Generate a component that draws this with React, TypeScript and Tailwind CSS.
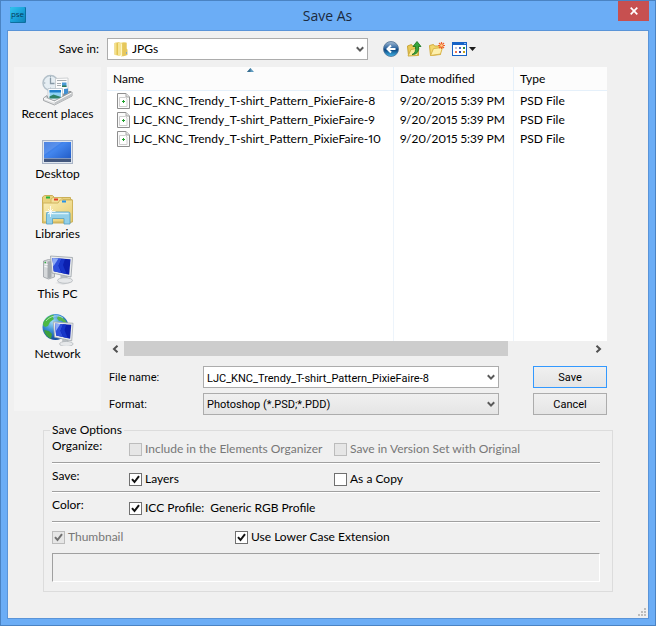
import React from 'react';

const files = [
  { name: 'LJC_KNC_Trendy_T-shirt_Pattern_PixieFaire-8', date: '9/20/2015 5:39 PM', type: 'PSD File' },
  { name: 'LJC_KNC_Trendy_T-shirt_Pattern_PixieFaire-9', date: '9/20/2015 5:39 PM', type: 'PSD File' },
  { name: 'LJC_KNC_Trendy_T-shirt_Pattern_PixieFaire-10', date: '9/20/2015 5:39 PM', type: 'PSD File' },
];

/* ---------- small icons ---------- */

function PseIcon() {
  return (
    <svg className="block w-4 h-4" viewBox="0 0 16 16">
      <defs>
        <linearGradient id="pse" x1="0" y1="0" x2="1" y2="1">
          <stop offset="0" stopColor="#35c3ee" />
          <stop offset="0.5" stopColor="#1ba5dc" />
          <stop offset="1" stopColor="#0d83b8" />
        </linearGradient>
      </defs>
      <rect width="16" height="16" rx="1" fill="#0d6f9f" />
      <rect width="15" height="15" rx="1" fill="url(#pse)" />
      <text x="7.5" y="10" textAnchor="middle" fontSize="8" fontFamily="Open Sans, sans-serif" fill="#063a5c">pse</text>
    </svg>
  );
}

function FolderIcon() {
  return (
    <svg className="block w-4 h-4" viewBox="0 0 16 16">
      <path d="M1.500 2l5-1v14l-5-1.500z" fill="#e3c452" />
      <path d="M1.500 2l2-.5v13l-2-.7z" fill="#f3e08c" />
      <path d="M5 1.500h7.500v12L5 15z" fill="#f6e596" />
      <path d="M8 2h5.500v12L8 15.500z" fill="#ecd068" />
      <path d="M9.500 1.500h4v6l1 1v5.500l-5 1.500z" fill="#e6c75c" />
      <path d="M8.500 2.500v12.500" stroke="#fdf5c4" />
      <path d="M13.500 11v2" stroke="#7fa8c8" />
    </svg>
  );
}

function FileIcon() {
  return (
    <svg className="block w-[13px] h-4 shrink-0" viewBox="0 0 13 16">
      <path d="M.5.5h8.500l3.500 3.500v11.500H.5z" fill="#fbfbfb" stroke="#8e8e8e" />
      <path d="M9 .5V4h3.500" fill="#e4e4e4" stroke="#a8a8a8" />
      <path d="M2.500 4.500h6l1.500 1.500v7.500H2.500z" fill="#fff" stroke="#cfcfcf" />
      <path d="M6.500 7v3M5 8.500h3" stroke="#1fa02c" />
    </svg>
  );
}

function Chevron() {
  return (
    <svg className="block w-[8px] h-[7px]" viewBox="0 0 8 7">
      <path d="M.8 1.200L4 4.600l3.200-3.400" fill="none" stroke="#5a5a5a" strokeWidth="2" />
    </svg>
  );
}

function BackIcon() {
  return (
    <svg className="block w-4 h-4" viewBox="0 0 16 16">
      <defs>
        <linearGradient id="back" x1="0" y1="0" x2="0" y2="1">
          <stop offset="0" stopColor="#a7bdd4" />
          <stop offset="0.45" stopColor="#2d65a0" />
          <stop offset="0.55" stopColor="#0b4580" />
          <stop offset="1" stopColor="#43b9ec" />
        </linearGradient>
      </defs>
      <circle cx="8" cy="8" r="7.500" fill="url(#back)" stroke="#4c6f92" strokeWidth=".8" />
      <path d="M12.500 8H5M8 4.500L4.500 8 8 11.500" fill="none" stroke="#fff" strokeWidth="2" />
    </svg>
  );
}

function UpIcon() {
  return (
    <svg className="block w-4 h-4" viewBox="0 0 16 16">
      <path d="M1.500 5l4-1.500 1 1.500h6v9.500h-10z" fill="#e8c955" stroke="#c9a436" />
      <path d="M2 15l3-6.500 8-1.500-1.500 7.500z" fill="#fbeb9c" stroke="#cfae42" />
      <path d="M6 13.500c3-1 4-3.500 3.500-8H7l4-5 4 5h-2.500c.5 5-1.500 8-6.500 8z" fill="#37a53a" stroke="#16701c" strokeWidth=".8" />
    </svg>
  );
}

function NewFolderIcon() {
  return (
    <svg className="block w-4 h-4" viewBox="0 0 16 16">
      <path d="M.5 4.500l4-1 1 1.500h6v8.500l-10 1z" fill="#f2d76c" stroke="#d2ab3c" />
      <path d="M1.500 14.500l3-7 9-1-2 6.500z" fill="#fdf0ae" stroke="#dab64c" />
      <path d="M12.500 1v7M9 4.500h7M10 2l5 5M15 2l-5 5" stroke="#f0612a" strokeWidth="1.200" />
      <circle cx="12.500" cy="4.500" r="1.300" fill="#ffd28a" />
    </svg>
  );
}

function ViewIcon() {
  return (
    <svg className="block w-[24px] h-[14px]" viewBox="0 0 24 14">
      <rect x=".5" y=".5" width="14" height="13" fill="#fff" stroke="#1763c6" />
      <path d="M0 1.500h15" stroke="#1763c6" strokeWidth="3" />
      <path d="M12 1.500h2" stroke="#8bbcf5" />
      <path d="M3 5h2v2H3z" fill="#c6c6d6" />
      <path d="M7 5h2v2H7z" fill="#4a66c0" />
      <path d="M11 5h2v2h-2z" fill="#2c8c3a" />
      <path d="M3 9h2v2H3z" fill="#ef7550" />
      <path d="M7 9h2v2H7z" fill="#2b3fae" />
      <path d="M11 9h2v2h-2z" fill="#c7a21c" />
      <path d="M17 5h7l-3.500 4z" fill="#1c1c1c" />
    </svg>
  );
}

/* ---------- places ---------- */

function Screen({ x, y }: { x: number; y: number }) {
  return (
    <g transform={`translate(${x} ${y})`}>
      <path d="M10 19l7 1v5h-7z" fill="#b9bec2" />
      <ellipse cx="14.500" cy="24.500" rx="7.500" ry="2.800" fill="#e6e8ea" stroke="#b0b5b9" strokeWidth=".8" />
      <path d="M0 0l22 1.500-1.500 19.500L1.500 17z" fill="#e8ebed" stroke="#9ba1a6" strokeWidth=".8" />
      <path d="M2 2l18 1.300-1.300 15.400L3.200 15.200z" fill="#0b1fae" />
      <path d="M2 2l9 .7-3 7 3 7.200-7.800-1.700z" fill="#2f50dc" />
      <path d="M11 2.700l3.500.3-2 6 3.500 9-4.500-1-3.500-7.300z" fill="#1735c8" />
      <path d="M2 2l6 .4-5.200 8z" fill="#8daaf5" />
    </g>
  );
}

function RecentIcon() {
  return (
    <svg className="block w-8 h-8" viewBox="0 0 32 32">
      <circle cx="8.500" cy="9" r="7.500" fill="#e6eef3" stroke="#b3c0c9" strokeWidth="1.500" />
      <path d="M8.500 4v5.500h4" fill="none" stroke="#8799a6" strokeWidth="1.300" />
      <path d="M8.500 2.200v1.300M2 9h1.300M8.500 15v-1.300" stroke="#8fa0ac" />
      <path d="M2 25l9-7 18-1 1 2-16 8z" fill="#8f9395" />
      <path d="M13.500 4.500L26 4v15.500H13.500z" fill="#fcfcfc" stroke="#c3c7c9" strokeWidth=".8" />
      <path d="M15 6.500h9.500M15 9.500h4M15 11.500h4" stroke="#a7adb1" />
      <path d="M20 8.500h4.500v4.500H20z" fill="#4b9ad6" />
      <path d="M20 11.500h4.500V13H20z" fill="#2e7a54" />
      <path d="M22 15l4-.5v5l-4 1z" fill="#3f8ed0" />
      <path d="M6 14.500h14.500V26H6z" fill="#fff" stroke="#b9c3ca" strokeWidth=".8" />
      <path d="M7.500 16H19v8.500H7.500z" fill="#8fd3f5" />
      <path d="M7.500 16H19v2.500H7.500z" fill="#1f80cc" />
      <path d="M7.500 22.500l4-2 7.500 2.500v1.500H7.500z" fill="#2f8266" />
      <path d="M1.500 24l3.500-2.500v2l7 3.500 18-9v4l-17.500 9-11-4.500z" fill="#e3e4e5" stroke="#929698" strokeWidth=".8" />
      <path d="M12.500 27.500L30 18.500V22l-17.500 9z" fill="#c3c6c8" />
      <path d="M2 24.500l10.500 3.500 17-9" fill="none" stroke="#fff" />
    </svg>
  );
}

function DesktopIcon() {
  return (
    <svg className="block w-8 h-8" viewBox="0 0 32 32">
      <defs>
        <linearGradient id="desk" x1="0" y1="0" x2="1" y2="1">
          <stop offset="0" stopColor="#2d61c8" />
          <stop offset="0.4" stopColor="#4386ee" />
          <stop offset="1" stopColor="#1d55c0" />
        </linearGradient>
      </defs>
      <rect x=".5" y="6.500" width="30" height="23" fill="#dfe6ef" stroke="#a9b4c6" />
      <rect x="2" y="8" width="27" height="20" fill="url(#desk)" />
      <path d="M2 8h18L2 21z" fill="#6da0f2" opacity=".55" />
      <rect x="2" y="24" width="27" height="4" fill="#43577d" />
      <path d="M2 24.500h27" stroke="#8398bd" />
    </svg>
  );
}

function LibrariesIcon() {
  return (
    <svg className="block w-8 h-8" viewBox="0 0 32 32">
      <defs>
        <linearGradient id="lib" x1="0" y1="0" x2="1" y2="1">
          <stop offset="0" stopColor="#fbf0bb" />
          <stop offset="1" stopColor="#e7cb6c" />
        </linearGradient>
      </defs>
      <path d="M.5 29V3l2-1.500h8l2 2h16V29z" fill="#e9d27e" stroke="#cbaf57" />
      <path d="M9 7V5l2-1.500h8l2 2h9V28H9z" fill="#f3e09a" stroke="#cbaf57" strokeWidth=".8" />
      <path d="M1 28V9h15l2-3h12.500v22z" fill="url(#lib)" stroke="#cfb45c" />
      <path d="M4 3.500h4" stroke="#22b43a" strokeWidth="2" />
      <path d="M12 5.500h4" stroke="#e23c26" strokeWidth="2" />
      <path d="M20 7.500h4" stroke="#2792e8" strokeWidth="2" />
      <path d="M4.500 30V19.500q0-1.500 1.500-1.500h20.500q1.500 0 1.500 1.500V30h-6v-5.500H10.500V30z" fill="#93cfe8" stroke="#529fc4" strokeWidth=".8" />
      <path d="M6.500 19.500h20" stroke="#d9f3fc" strokeWidth="1.500" />
      <path d="M8.500 12v11M3.500 17.500h10M6 15l5 5M11 15l-5 5" stroke="#fff" strokeWidth=".8" />
    </svg>
  );
}

function PcIcon() {
  return (
    <svg className="block w-8 h-8" viewBox="0 0 32 32">
      <path d="M1.500 7l5-1.500 6 1v16.500l-6 2-5-2z" fill="#d6d9db" stroke="#9aa0a4" strokeWidth=".8" />
      <path d="M5.500 7.500l4-.5v16.500l-4 1z" fill="#a5aaae" />
      <path d="M2.500 10l3 .5M2.500 12.500l3 .5" stroke="#fff" />
      <path d="M2.500 8.500H4" stroke="#34a844" strokeWidth="1.500" />
      <path d="M13 29l10-3 7 2-9 3z" fill="#d9dcde" opacity=".7" />
      <Screen x={8.5} y={2} />
    </svg>
  );
}

function NetworkIcon() {
  return (
    <svg className="block w-8 h-8" viewBox="0 0 32 32">
      <defs>
        <radialGradient id="globe" cx="0.4" cy="0.3" r="0.7">
          <stop offset="0" stopColor="#a4dcf8" />
          <stop offset="0.5" stopColor="#3b8fd4" />
          <stop offset="1" stopColor="#12489a" />
        </radialGradient>
      </defs>
      <circle cx="13.500" cy="13" r="13" fill="url(#globe)" />
      <path d="M2 7C5 3 8 1 12 .8l-1 2.700 1 1.500-4 3-2 4-3 1-2-2c0-1 .3-3 1-4z" fill="#4cb944" />
      <path d="M16 2c4 .5 7 3 9 7l-3-.5-3-2-2 .5-2-2.500z" fill="#57b64e" />
      <path d="M2 16l5 1 3 3-1 5c-4-2-6.500-5-7-9z" fill="#3d9f3e" />
      <path d="M4 7c4-5 12-7 17-3" fill="none" stroke="#e0f7ff" opacity=".6" />
      <g transform="translate(0 7)">
        <g transform="scale(.9)">
          <Screen x={12.5} y={1} />
        </g>
      </g>
    </svg>
  );
}

const places = [
  { label: 'Recent places', icon: <RecentIcon /> },
  { label: 'Desktop', icon: <DesktopIcon /> },
  { label: 'Libraries', icon: <LibrariesIcon /> },
  { label: 'This PC', icon: <PcIcon /> },
  { label: 'Network', icon: <NetworkIcon /> },
];

function Check({ label, checked, disabled }: { label: string; checked?: boolean; disabled?: boolean }) {
  return (
    <label className="relative flex items-center gap-[3px] pt-[3px] whitespace-nowrap has-disabled:text-[#777]">
      <input
        type="checkbox"
        defaultChecked={checked}
        disabled={disabled}
        className="peer appearance-none w-[13px] h-[13px] shrink-0 border border-[#707070] bg-white disabled:border-[#bcbcbc] disabled:bg-[#e6e6e6]"
      />
      <svg
        className="absolute left-0 w-[13px] h-[13px] text-[#111] opacity-0 pointer-events-none peer-checked:opacity-100 peer-disabled:text-[#707070]"
        viewBox="0 0 13 13"
      >
        <path d="M3 6.200l2.500 2.800L10 3.200" fill="none" stroke="currentColor" strokeWidth="2" />
      </svg>
      <span className="whitespace-pre">{label}</span>
    </label>
  );
}

function Separator() {
  return <hr className="h-[2px] border-t border-b border-t-[#a0a0a0] border-b-white" />;
}

export default function App() {
  return (
    <div className="min-h-screen flex flex-col bg-[#6badf6] border border-[#4a83c3] px-[6px] pb-[6px] font-[Lato,sans-serif] text-[12px] leading-4 text-black">
      <header className="relative flex items-start h-[29px]">
        <div className="pt-[6px] pl-[3px]">
          <PseIcon />
        </div>
        <h1 className="flex-1 pt-[5px] pr-[20px] text-center font-['Open_Sans',sans-serif] text-[14px] leading-5 text-[#1b2a3d]">Save As</h1>
        <button aria-label="Close" className="absolute right-0 top-0 w-[31px] h-5 flex items-center justify-center bg-[#c75050]">
          <svg className="w-2 h-2" viewBox="0 0 8 8">
            <path d="M.7.7l6.600 6.600M7.300.7L.7 7.300" stroke="#fff" strokeWidth="1.700" />
          </svg>
        </button>
      </header>

      <main className="relative flex-1 bg-[#f0f0f0] border border-[#5a94d8] pl-[6px] pr-[35px] pt-[7px]">
        <div className="flex items-center h-[22px] mb-[7px] pr-[6px]">
          <label htmlFor="save-in" className="w-[93px] pr-[8px] text-right">Save in:</label>
          <div className="relative w-[261px]">
            <select id="save-in" className="appearance-none block w-full h-[22px] pl-[24px] bg-white border border-[#acacac]">
              <option>JPGs</option>
            </select>
            <div className="absolute left-[6px] top-[3px] pointer-events-none"><FolderIcon /></div>
            <div className="absolute right-[4px] top-[8px] pointer-events-none"><Chevron /></div>
          </div>
          <div className="flex items-center gap-[7px] ml-[15px]">
            <button aria-label="Back"><BackIcon /></button>
            <button aria-label="Up one level"><UpIcon /></button>
            <button aria-label="New folder"><NewFolderIcon /></button>
            <button aria-label="View menu"><ViewIcon /></button>
          </div>
        </div>

        <div className="flex gap-[6px] mr-[6px]">
          <nav className="flex flex-col gap-3 w-[87px] shrink-0 pt-[7px] mb-1 bg-[#f4f4f4]">
            {places.map(place => (
              <button key={place.label} className="flex flex-col items-center whitespace-nowrap">
                {place.icon}
                {place.label}
              </button>
            ))}
          </nav>

          <div className="flex-1 min-w-0">
            <div className="relative h-[274px] bg-white">
              <table className="w-full h-full table-fixed border-separate border-spacing-0 text-left whitespace-nowrap">
                <colgroup>
                  <col />
                  <col className="w-[120px]" />
                  <col className="w-[93px]" />
                </colgroup>
                <thead>
                  <tr className="h-6 bg-[#fcfcfc]">
                    <th className="font-normal p-0 pl-[6px] border-r border-b border-[#e5f0fa]">Name</th>
                    <th className="font-normal p-0 pl-[6px] border-r border-b border-[#e5f0fa]">Date modified</th>
                    <th className="font-normal p-0 pl-[6px] border-b border-[#e5f0fa]">Type</th>
                  </tr>
                </thead>
                <tbody className="proportional-nums">
                  {files.map(file => (
                    <tr key={file.name} className="h-[19px]">
                      <td className="p-0 pl-[10px] border-r border-[#edf4fb]">
                        <div className="flex items-center gap-[3px]">
                          <FileIcon />
                          {file.name}
                        </div>
                      </td>
                      <td className="p-0 pl-[6px] border-r border-[#edf4fb]">{file.date}</td>
                      <td className="p-0 pl-[6px]">{file.type}</td>
                    </tr>
                  ))}
                  <tr>
                    <td className="p-0 border-r border-[#edf4fb]" />
                    <td className="p-0 border-r border-[#edf4fb]" />
                    <td className="p-0" />
                  </tr>
                </tbody>
              </table>
              <svg className="absolute left-[140px] top-[1px] w-[7px] h-[4px]" viewBox="0 0 7 4">
                <path d="M0 4l3.500-4L7 4z" fill="#5f9cc0" />
                <path d="M0 4l3.500-4v4z" fill="#3c6f90" />
              </svg>
            </div>

            {/* horizontal scroll bar */}
            <div className="flex h-[15px] text-[#505050]">
              <button aria-label="Scroll left" className="w-[17px] flex items-center justify-center">
                <svg className="w-[7px] h-2" viewBox="0 0 7 8">
                  <path d="M5.500.8L2 4l3.500 3.200" fill="none" stroke="currentColor" strokeWidth="2" />
                </svg>
              </button>
              <div className="flex-1">
                <div className="w-[82.4%] h-full bg-[#cdcdcd]" />
              </div>
              <button aria-label="Scroll right" className="w-[17px] flex items-center justify-center">
                <svg className="w-[7px] h-2" viewBox="0 0 7 8">
                  <path d="M1.500.8L5 4 1.500 7.200" fill="none" stroke="currentColor" strokeWidth="2" />
                </svg>
              </button>
            </div>

            <div className="grid grid-cols-[94px_1fr_108px] gap-y-[5px] items-center mt-[10px] pl-[2px] font-[Roboto,sans-serif] text-[11px]">
              <label htmlFor="file-name" className="pt-[2px]">File name:</label>
              <div className="relative">
                <input id="file-name" type="text" defaultValue="LJC_KNC_Trendy_T-shirt_Pattern_PixieFaire-8" className="block w-full h-[22px] pt-[2px] pl-[3px] pr-5 bg-white border border-[#acacac]" />
                <div className="absolute right-[4px] top-[8px] pointer-events-none"><Chevron /></div>
              </div>
              <button className="justify-self-end w-[74px] h-[22px] pt-[2px] bg-linear-to-b from-[#f0f0f0] to-[#e5e5e5] border border-[#3399ff]">Save</button>
              <label htmlFor="format" className="pt-[2px]">Format:</label>
              <div className="relative">
                <select id="format" className="appearance-none block w-full h-[22px] pt-[2px] pl-[3px] bg-linear-to-b from-[#f0f0f0] to-[#e5e5e5] border border-[#acacac]">
                  <option>Photoshop (*.PSD;*.PDD)</option>
                </select>
                <div className="absolute right-[4px] top-[8px] pointer-events-none"><Chevron /></div>
              </div>
              <button className="justify-self-end w-[74px] h-[22px] pt-[2px] bg-linear-to-b from-[#f0f0f0] to-[#e5e5e5] border border-[#acacac]">Cancel</button>
            </div>
          </div>
        </div>

        <fieldset className="mt-[7px] ml-[29px] pl-2 pr-[12px] pb-[9px] border border-[#dcdcdc]">
          <legend className="-ml-[2px] px-[2px]">Save Options</legend>
          <div className="grid grid-cols-[77px_205px_1fr] items-start h-6">
            <span>Organize:</span>
            <Check label="Include in the Elements Organizer" disabled />
            <Check label="Save in Version Set with Original" disabled />
          </div>
          <Separator />
          <div className="grid grid-cols-[77px_205px_1fr] items-start h-[27px] pt-1">
            <span>Save:</span>
            <Check label="Layers" checked />
            <Check label="As a Copy" />
          </div>
          <Separator />
          <div className="grid grid-cols-[77px_1fr] items-start h-7 pt-1">
            <span>Color:</span>
            <Check label="ICC Profile:  Generic RGB Profile" checked />
          </div>
          <Separator />
          <div className="grid grid-cols-[183px_1fr] items-start h-[30px] pt-[3px]">
            <Check label="Thumbnail" checked disabled />
            <Check label="Use Lower Case Extension" checked />
          </div>
          <div className="h-[29px] border border-t-[#a0a0a0] border-l-[#a0a0a0] border-r-white border-b-white" />
        </fieldset>

        {/* resize grip */}
        <svg className="absolute right-[2px] bottom-[2px] w-2 h-2" viewBox="0 0 8 8">
          <path d="M6 0h2v2H6zM3 3h2v2H3zM6 3h2v2H6zM0 6h2v2H0zM3 6h2v2H3zM6 6h2v2H6z" fill="#bdbdbd" />
        </svg>
      </main>
    </div>
  );
}
